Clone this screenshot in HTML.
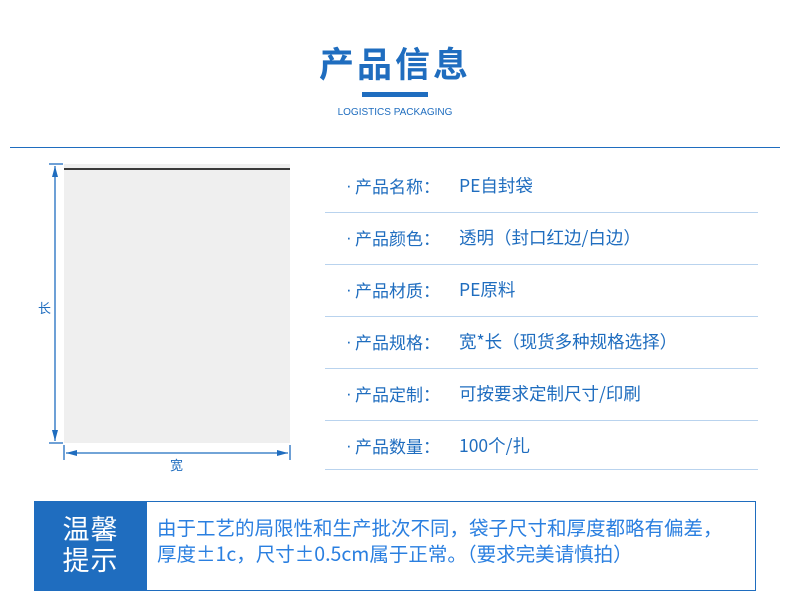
<!DOCTYPE html>
<html><head><meta charset="utf-8"><style>
body{margin:0;width:790px;height:615px;background:#fff;position:relative;overflow:hidden;font-family:"Liberation Sans","Noto Sans CJK SC",sans-serif}
.a{position:absolute}
.title{left:0;width:790px;top:44px;text-align:center;font-size:35px;font-weight:bold;color:#1f6dbf;letter-spacing:3px;line-height:44px}
.row{left:325px;width:433px;height:52px;border-bottom:1px solid #b9d3ee;color:#1f6dbf;font-size:17px;font-family:"Noto Sans CJK SC","Liberation Sans",sans-serif}
.row span{position:absolute;left:134px;line-height:52px;top:0;font-size:17.5px}
.row b{font-weight:normal;position:absolute;left:30px;line-height:52px;top:0}
.row i{font-style:normal;position:absolute;left:-9px;font-family:"Liberation Sans",sans-serif}
</style></head><body>
<div class="a title">产品信息</div>
<div class="a" style="left:362px;top:92px;width:66px;height:5px;background:#1f6dbf"></div>
<div class="a" style="left:0;width:790px;top:107px;text-align:center;font-size:10px;color:#1f6dbf">LOGISTICS PACKAGING</div>
<div class="a" style="left:10px;top:147px;width:770px;height:1px;background:#1f6dbf"></div>

<div class="a" style="left:64px;top:164px;width:226px;height:279px;background:#efefef"></div>
<div class="a" style="left:64px;top:168px;width:226px;height:2px;background:#3a3a3a"></div>
<svg class="a" style="left:0;top:0" width="320" height="480">
<g stroke="#1f6dbf" stroke-width="1.3" fill="#1f6dbf">
<line x1="49" y1="164" x2="63" y2="164"/><line x1="49" y1="443" x2="63" y2="443"/>
<line x1="55" y1="166" x2="55" y2="441"/>
<polygon points="55,166 52,177 58,177" stroke="none"/><polygon points="55,441 52,430 58,430" stroke="none"/>
<line x1="64" y1="445" x2="64" y2="460"/><line x1="290" y1="445" x2="290" y2="460"/>
<line x1="66" y1="453" x2="288" y2="453"/>
<polygon points="66,453 77,450 77,456" stroke="none"/><polygon points="288,453 277,450 277,456" stroke="none"/>
</g></svg>
<div class="a" style="left:38px;top:298px;font-size:13px;color:#1f6dbf;font-family:'Noto Sans CJK SC',sans-serif;white-space:nowrap">长</div>
<div class="a" style="left:170px;top:455px;font-size:13px;color:#1f6dbf;font-family:'Noto Sans CJK SC',sans-serif">宽</div>

<div class="a row" style="top:160px"><b><i>·</i>产品名称：</b><span>PE自封袋</span></div>
<div class="a row" style="top:212px"><b><i>·</i>产品颜色：</b><span>透明（封口红边/白边）</span></div>
<div class="a row" style="top:264px"><b><i>·</i>产品材质：</b><span>PE原料</span></div>
<div class="a row" style="top:316px"><b><i>·</i>产品规格：</b><span>宽*长（现货多种规格选择）</span></div>
<div class="a row" style="top:368px"><b><i>·</i>产品定制：</b><span>可按要求定制尺寸/印刷</span></div>
<div class="a row" style="top:420px;height:49px"><b><i>·</i>产品数量：</b><span>100个/扎</span></div>

<div class="a" style="left:34px;top:501px;width:720px;height:88px;border:1px solid #1f6dbf"></div>
<div class="a" style="left:34px;top:501px;width:113px;height:90px;background:#1f6dbf;color:#fff;font-size:27px;line-height:31px;text-align:center;padding-top:14px;box-sizing:border-box;letter-spacing:1px">温馨<br>提示</div>
<div class="a" style="left:157px;top:514px;color:#2a7fe0;font-size:19.5px;line-height:26px;white-space:nowrap;font-family:'Noto Sans CJK SC','Liberation Sans',sans-serif">由于工艺的局限性和生产批次不同，袋子尺寸和厚度都略有偏差，<br>厚度±1c，尺寸±0.5cm属于正常。（要求完美请慎拍）</div>
</body></html>
